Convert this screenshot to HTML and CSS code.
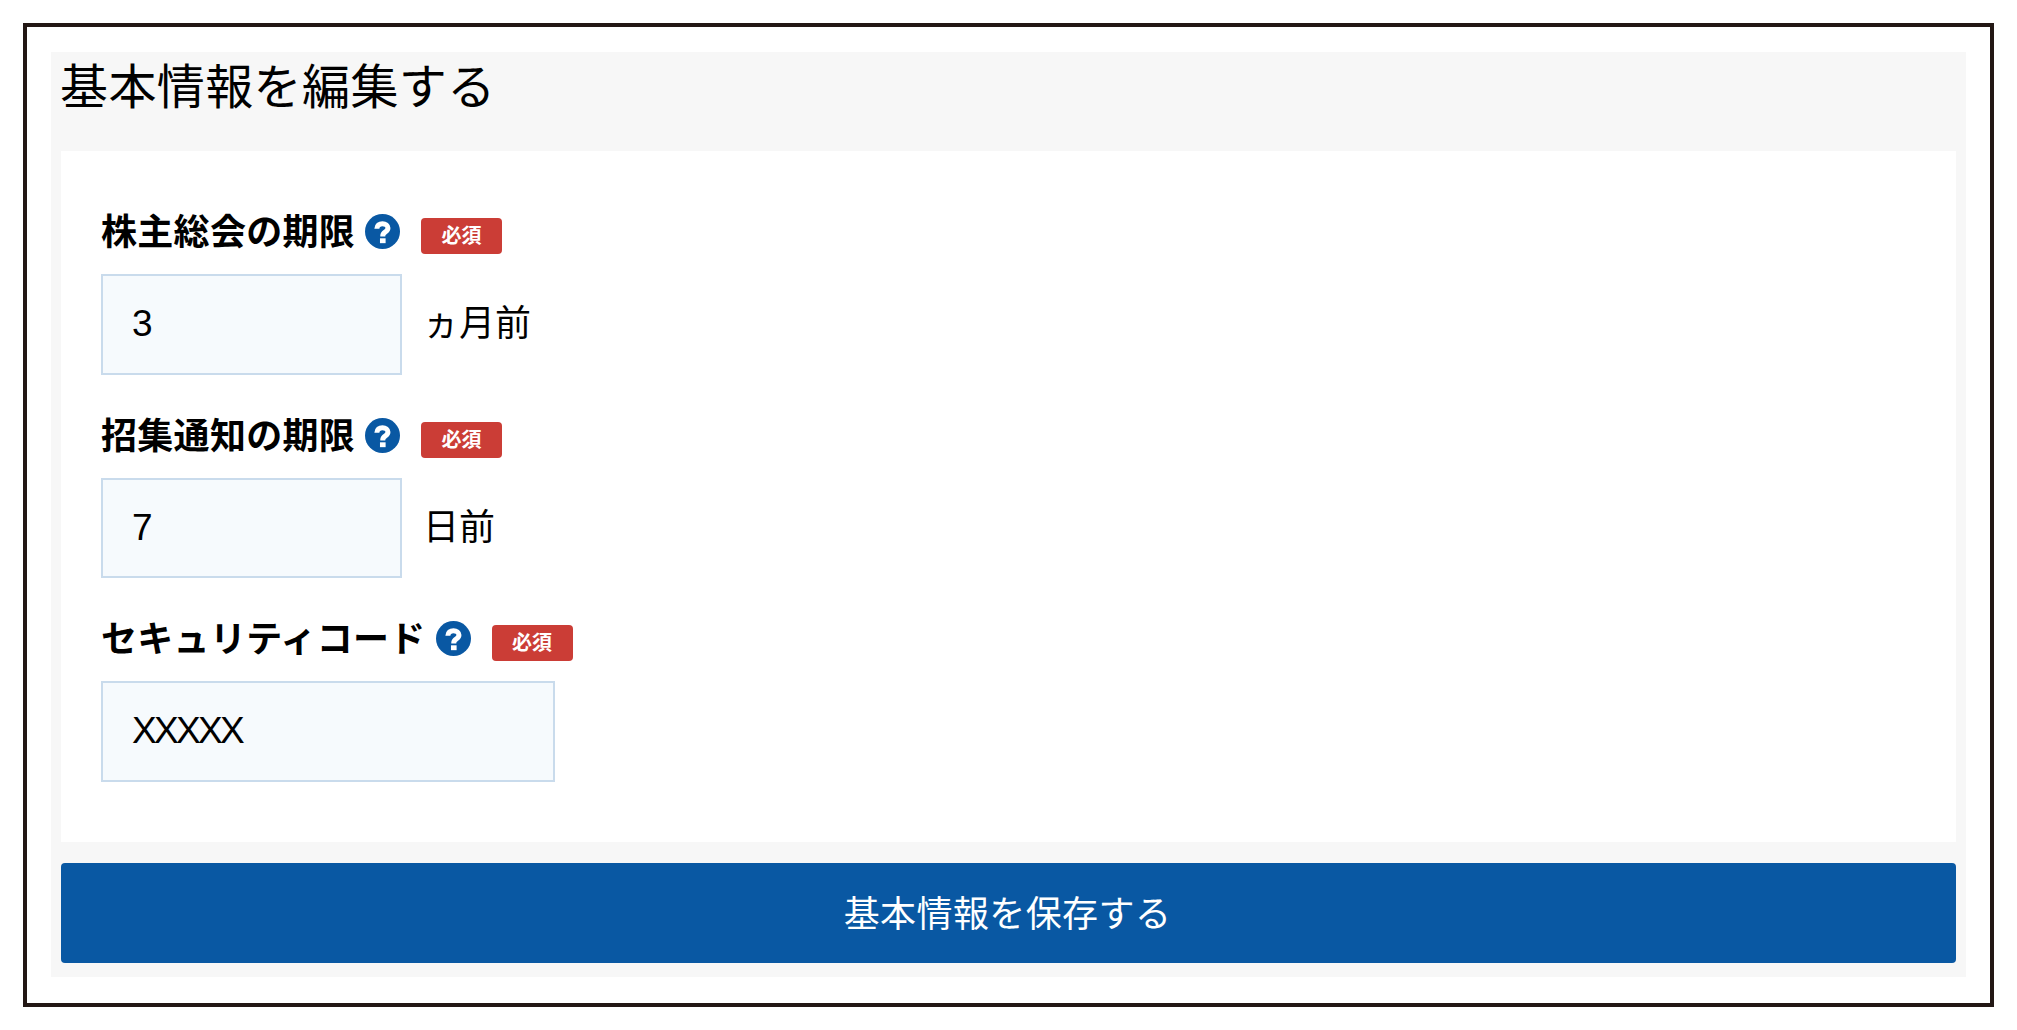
FILE: index.html
```html
<!DOCTYPE html>
<html lang="ja">
<head>
    <meta charset="UTF-8">
    <meta name="viewport" content="width=device-width, initial-scale=1.0">
    <title>基本情報を編集する</title>
    <link rel="stylesheet" href="styles.css">
</head>
<body>
    <div class="frame">
        <section class="panel">
            <h1 class="panel-title">基本情報を編集する</h1>
            <form class="card">
                <div class="field">
                    <div class="field-label">
                        <label>株主総会の期限</label>
                        <svg class="help-icon" viewBox="0 0 36 36"><circle cx="18" cy="18" r="18" fill="#0958a3"/><path d="M12.2 15.2c0-3.6 2.5-5.2 5.8-5.2 3.2 0 5.6 1.7 5.6 4.5 0 2-1.1 3-2.6 3.9-1.7 1.1-2.7 1.8-2.7 3.9v.9" fill="none" stroke="#fff" stroke-width="5.2"/><rect x="15.4" y="25" width="5.8" height="5" fill="#fff"/></svg>
                        <span class="required">必須</span>
                    </div>
                    <div class="input-row">
                        <div class="input-box input-small">3</div>
                        <span class="unit">ヵ月前</span>
                    </div>
                </div>
                <div class="field">
                    <div class="field-label">
                        <label>招集通知の期限</label>
                        <svg class="help-icon" viewBox="0 0 36 36"><circle cx="18" cy="18" r="18" fill="#0958a3"/><path d="M12.2 15.2c0-3.6 2.5-5.2 5.8-5.2 3.2 0 5.6 1.7 5.6 4.5 0 2-1.1 3-2.6 3.9-1.7 1.1-2.7 1.8-2.7 3.9v.9" fill="none" stroke="#fff" stroke-width="5.2"/><rect x="15.4" y="25" width="5.8" height="5" fill="#fff"/></svg>
                        <span class="required">必須</span>
                    </div>
                    <div class="input-row">
                        <div class="input-box input-small input-short">7</div>
                        <span class="unit">日前</span>
                    </div>
                </div>
                <div class="field">
                    <div class="field-label">
                        <label>セキュリティコード</label>
                        <svg class="help-icon" viewBox="0 0 36 36"><circle cx="18" cy="18" r="18" fill="#0958a3"/><path d="M12.2 15.2c0-3.6 2.5-5.2 5.8-5.2 3.2 0 5.6 1.7 5.6 4.5 0 2-1.1 3-2.6 3.9-1.7 1.1-2.7 1.8-2.7 3.9v.9" fill="none" stroke="#fff" stroke-width="5.2"/><rect x="15.4" y="25" width="5.8" height="5" fill="#fff"/></svg>
                        <span class="required">必須</span>
                    </div>
                    <div class="input-row">
                        <div class="input-box input-large">XXXXX</div>
                    </div>
                </div>
            </form>
            <button type="button" class="save-btn">基本情報を保存する</button>
        </section>
    </div>
</body>
</html>
```

FILE: styles.css
```css
* {
    margin: 0;
    padding: 0;
    box-sizing: border-box;
}

body {
    font-family: "Liberation Sans", "Noto Sans CJK JP", sans-serif;
    background-color: #fff;
    color: #000;
    padding: 23px;
}

.frame {
    height: 984px;
    border: 4px solid #231815;
    padding: 25px 24px 26px;
}

.panel {
    background-color: #f7f7f7;
    padding: 0 10px 14px;
}

.panel-title {
    height: 99px;
    font-size: 48px;
    font-weight: 400;
    line-height: 72px;
    letter-spacing: 0.4px;
    margin-left: -1px;
}

.card {
    background-color: #fff;
    padding: 63px 40px 60px;
    display: flex;
    flex-direction: column;
    gap: 43px;
}

.field-label {
    display: flex;
    align-items: center;
    height: 36px;
    margin-bottom: 24px;
}

.field-label label {
    font-size: 36px;
    font-weight: 700;
    line-height: 33px;
    letter-spacing: 0.3px;
}

.help-icon {
    width: 35px;
    height: 35px;
    margin-left: 10px;
    margin-bottom: 1px;
}

.required {
    width: 81px;
    height: 36px;
    margin-left: 21px;
    margin-top: 8px;
    background-color: #cb3d36;
    border-radius: 4px;
    color: #fff;
    font-size: 20px;
    font-weight: 700;
    line-height: 36px;
    text-align: center;
}

.input-row {
    display: flex;
    align-items: center;
    gap: 21px;
}

.input-box {
    height: 101px;
    padding-left: 29px;
    background-color: #f6fafd;
    border: 2px solid #c9dbec;
    font-size: 37px;
    line-height: 96px;
}

.input-small {
    width: 301px;
}

.input-short {
    height: 100px;
}

.input-large {
    width: 454px;
    letter-spacing: -2.7px;
}

.unit {
    font-size: 36px;
    padding-bottom: 9px;
}

.save-btn {
    display: block;
    width: 100%;
    height: 100px;
    margin-top: 21px;
    padding-bottom: 5px;
    padding-right: 2px;
    background-color: #0958a3;
    border: none;
    border-radius: 4px;
    color: #fff;
    font-family: inherit;
    font-size: 36px;
    letter-spacing: 0.4px;
}
```
